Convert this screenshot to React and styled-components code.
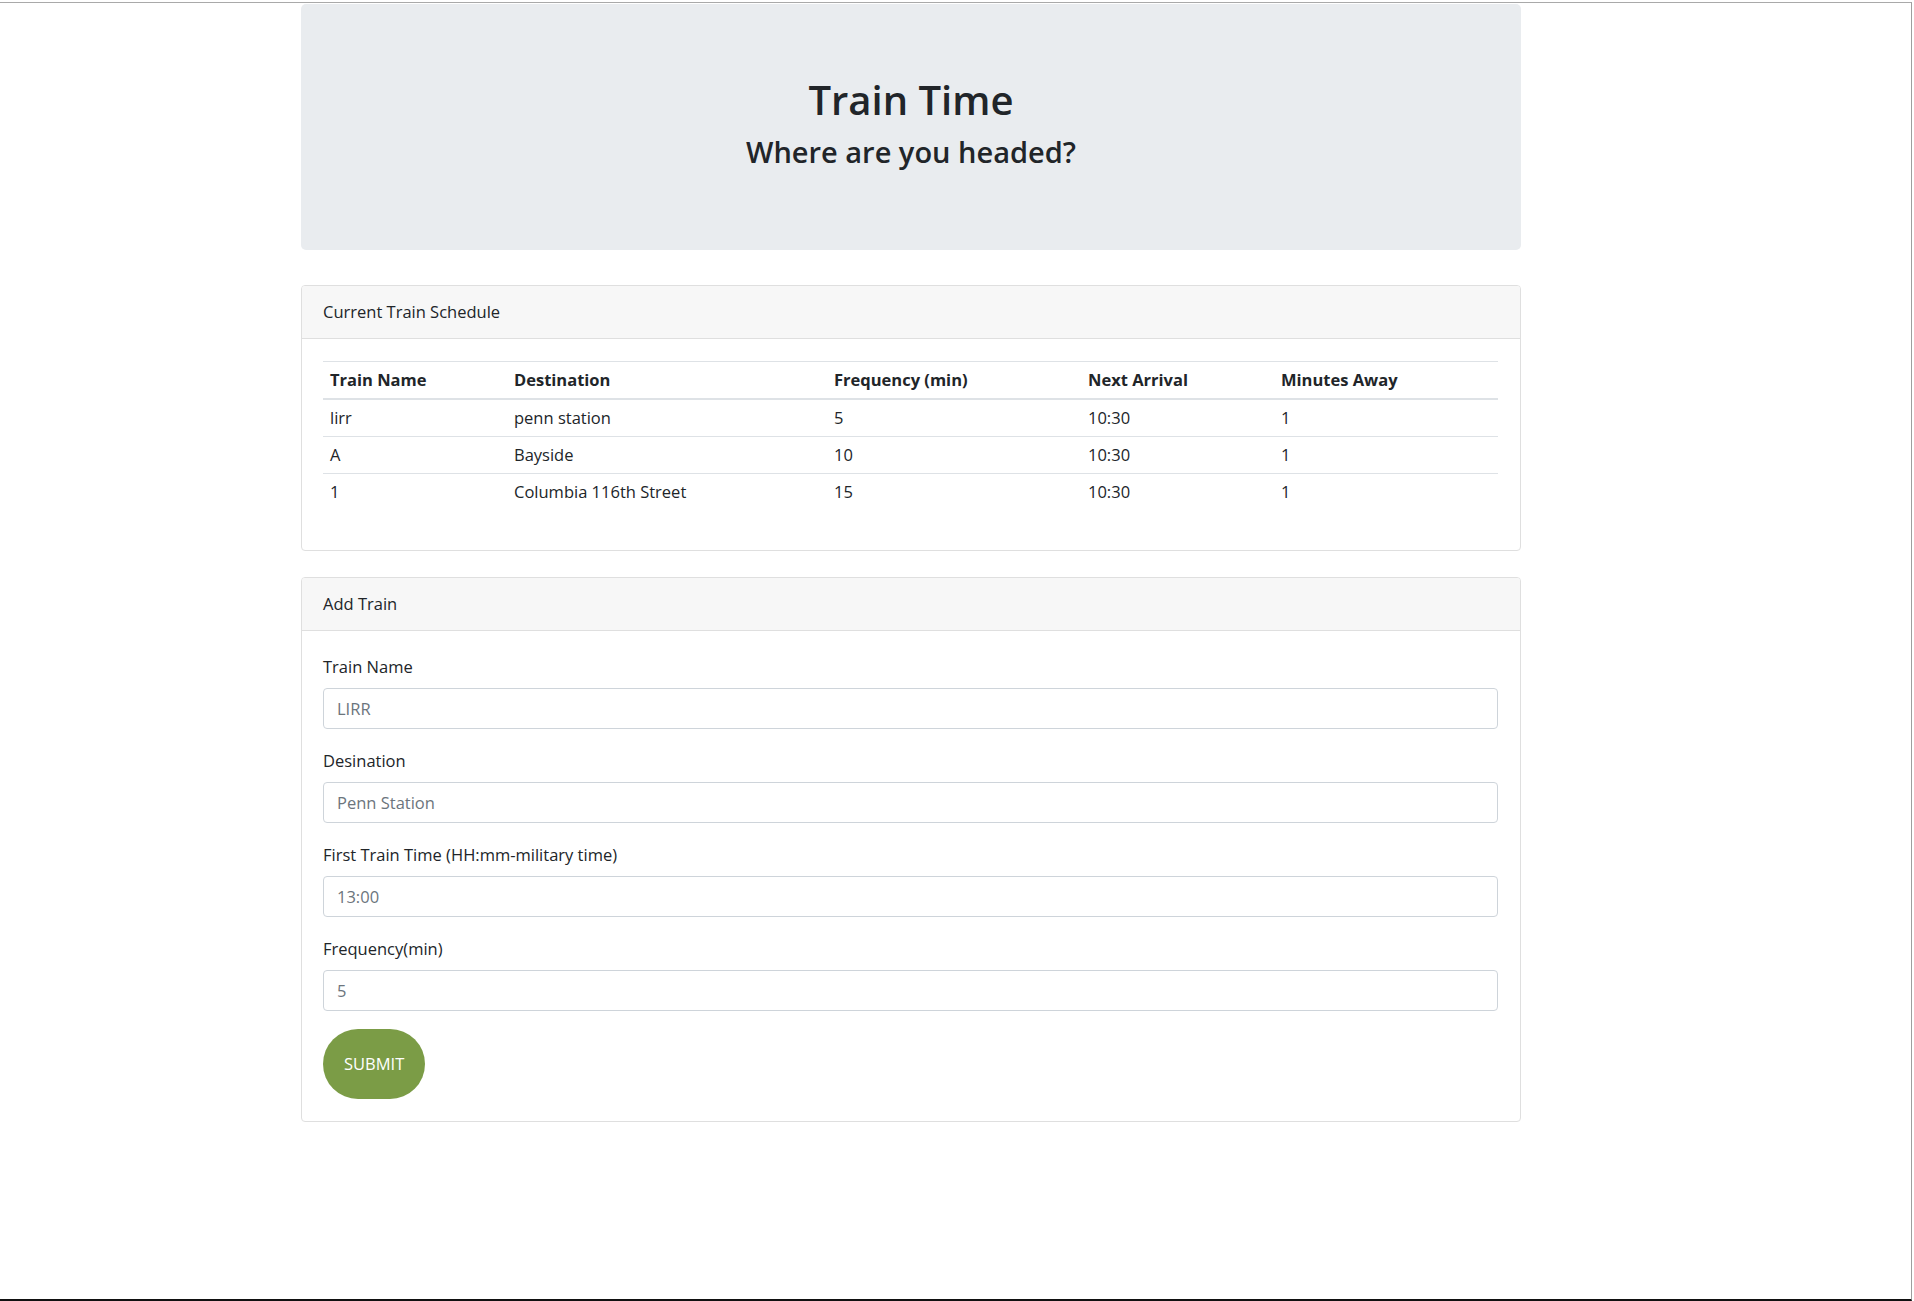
import React from "react";
import styled, { createGlobalStyle } from "styled-components";

const GlobalStyle = createGlobalStyle`
  html, body {
    margin: 0;
    padding: 0;
    background: #ffffff;
  }
  body {
    font-family: "Open Sans", "Noto Sans", sans-serif;
    color: #212529;
    font-size: 16.5px;
    line-height: 24px;
  }
  * { box-sizing: border-box; }
`;

const Frame = styled.div`
  margin-top: 2px;
  width: 1912px;
  height: 1299px;
  border-top: 1px solid #a9a9a9;
  border-right: 1px solid #9e9e9e;
  border-bottom: 2px solid #111111;
  padding-top: 1px;
  overflow: hidden;
`;

const Container = styled.div`
  width: 1220px;
  margin-left: 301px;
`;

const Jumbotron = styled.header`
  background: #e9ecef;
  border-radius: 5px;
  padding: 72px 0 72px;
  margin-bottom: 35px;
  text-align: center;
`;

const Title = styled.h1`
  margin: 0 0 11px;
  font-size: 40px;
  font-weight: 600;
  line-height: 1.2;
  color: #212529;
`;

const Subtitle = styled.h3`
  margin: 0 0 8px;
  font-size: 29px;
  font-weight: 600;
  line-height: 1.2;
  color: #212529;
`;

const Card = styled.section`
  background: #ffffff;
  border: 1px solid #dfdfdf;
  border-radius: 4px;
  margin-bottom: ${(p) => p.$gap || 0}px;
  overflow: hidden;
`;

const CardHeader = styled.div`
  background: #f7f7f7;
  border-bottom: 1px solid #dfdfdf;
  padding: 14px 21px;
  line-height: 24px;
  font-size: 16.5px;
  color: #212529;
`;

const CardBody = styled.div`
  padding: ${(p) => p.$top}px 22px 22px 21px;
`;

const Table = styled.table`
  width: 100%;
  table-layout: fixed;
  border-collapse: collapse;
  margin-bottom: 18px;
  color: #212529;
`;

const Th = styled.th`
  text-align: left;
  font-weight: 700;
  padding: 6px 7px;
  line-height: 24px;
  border-top: 1px solid #dee2e6;
  border-bottom: 2px solid #dee2e6;
`;

const Td = styled.td`
  padding: 6px 7px;
  line-height: 24px;
  border-top: ${(p) => (p.$first ? "0" : "1px solid #dee2e6")};
`;

const FormGroup = styled.div`
  margin-bottom: ${(p) => (p.$last ? 18 : 20)}px;
`;

const Label = styled.label`
  display: block;
  margin-bottom: 9px;
  line-height: 24px;
  font-size: 16.5px;
  color: #212529;
`;

const Input = styled.input`
  display: block;
  width: 100%;
  height: 41px;
  padding: 0 13px;
  font-family: "Open Sans", "Noto Sans", sans-serif;
  font-size: 16.5px;
  color: #495057;
  background: #ffffff;
  border: 1px solid #ced4da;
  border-radius: 4px;
  outline: none;
  &::placeholder {
    color: #6c757d;
    opacity: 1;
  }
`;

const SubmitButton = styled.button`
  display: block;
  height: 70px;
  padding: 0 21px;
  border: none;
  border-radius: 35px;
  background: #7b9c46;
  color: #ffffff;
  font-family: "Open Sans", "Noto Sans", sans-serif;
  font-size: 16.5px;
  line-height: 24px;
  text-transform: uppercase;
  cursor: pointer;
`;

const columns = [
  { label: "Train Name", width: 184 },
  { label: "Destination", width: 320 },
  { label: "Frequency (min)", width: 254 },
  { label: "Next Arrival", width: 193 },
  { label: "Minutes Away", width: 224 },
];

const trains = [
  ["lirr", "penn station", "5", "10:30", "1"],
  ["A", "Bayside", "10", "10:30", "1"],
  ["1", "Columbia 116th Street", "15", "10:30", "1"],
];

const fields = [
  { id: "name", label: "Train Name", placeholder: "LIRR" },
  { id: "dest", label: "Desination", placeholder: "Penn Station" },
  { id: "first", label: "First Train Time (HH:mm-military time)", placeholder: "13:00" },
  { id: "freq", label: "Frequency(min)", placeholder: "5" },
];

export default function App() {
  return (
    <>
      <GlobalStyle />
      <Frame>
        <Container>
          <Jumbotron>
            <Title>Train Time</Title>
            <Subtitle>Where are you headed?</Subtitle>
          </Jumbotron>

          <Card $gap={26}>
            <CardHeader>Current Train Schedule</CardHeader>
            <CardBody $top={22}>
              <Table>
                <colgroup>
                  {columns.map((c) => (
                    <col key={c.label} style={{ width: c.width }} />
                  ))}
                </colgroup>
                <thead>
                  <tr>
                    {columns.map((c) => (
                      <Th key={c.label}>{c.label}</Th>
                    ))}
                  </tr>
                </thead>
                <tbody>
                  {trains.map((row, i) => (
                    <tr key={i}>
                      {row.map((cell, j) => (
                        <Td key={j} $first={i === 0}>
                          {cell}
                        </Td>
                      ))}
                    </tr>
                  ))}
                </tbody>
              </Table>
            </CardBody>
          </Card>

          <Card>
            <CardHeader>Add Train</CardHeader>
            <CardBody $top={24}>
              <form onSubmit={(e) => e.preventDefault()}>
                {fields.map((f, i) => (
                  <FormGroup key={f.id} $last={i === fields.length - 1}>
                    <Label htmlFor={f.id}>{f.label}</Label>
                    <Input id={f.id} type="text" placeholder={f.placeholder} />
                  </FormGroup>
                ))}
                <SubmitButton type="submit">Submit</SubmitButton>
              </form>
            </CardBody>
          </Card>
        </Container>
      </Frame>
    </>
  );
}
